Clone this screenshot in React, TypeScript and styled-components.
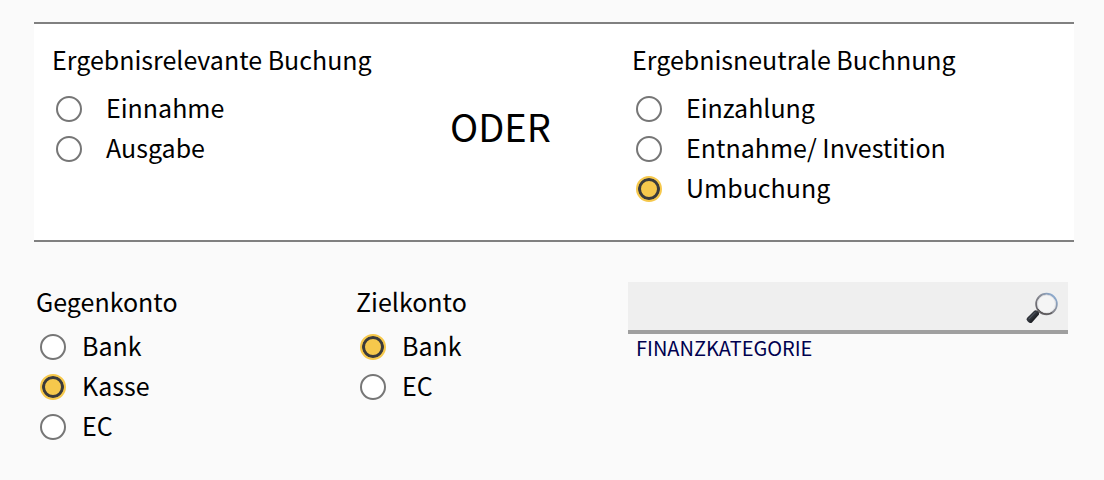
import React, { useState } from 'react';
import styled, { createGlobalStyle } from 'styled-components';

const GlobalStyle = createGlobalStyle`
  * { box-sizing: border-box; }
  body {
    margin: 0;
    background: #fafafa;
    color: #000;
    font-family: "Noto Sans CJK SC", "Noto Sans", sans-serif;
    font-size: 25px;
    line-height: 40px;
  }
`;

const Page = styled.main`
  padding: 22px 30px 32px 34px;
`;

const BookingPanel = styled.section`
  display: grid;
  grid-template-columns: 400fr 180fr 444fr;
  padding: 16px 0 31px 16px;
  background: #fff;
  border-top: 2px solid #808080;
  border-bottom: 2px solid #808080;
`;

const Accounts = styled.section`
  display: grid;
  grid-template-columns: 320fr 274fr 440fr;
  align-items: start;
  padding: 40px 6px 0 0;
`;

const Group = styled.fieldset`
  min-width: 0;
  margin: 0;
  padding: 0;
  border: 0;
`;

const Legend = styled.legend<{ $tall?: boolean }>`
  padding: 0 0 0 2px;
  height: ${({ $tall }) => ($tall ? 49 : 45)}px;
  line-height: 38px;
  white-space: nowrap;
`;

const Option = styled.label<{ $gap: number }>`
  display: flex;
  align-items: center;
  gap: ${({ $gap }) => $gap}px;
  height: 40px;
  padding-left: 6px;
  white-space: nowrap;
`;

const OptionText = styled.span`
  padding-bottom: 4px;
`;

const Radio = styled.input`
  appearance: none;
  flex: none;
  width: 26px;
  height: 26px;
  margin: 0;
  border: 2px solid #767676;
  border-radius: 50%;
  background: #fff;

  &:checked {
    border-color: #f6c84c;
    background: #f6c84c;
    box-shadow: inset 0 0 0 3px #3b3b3b;
  }
`;

const Or = styled.p`
  margin: 0;
  padding-top: 66px;
  font-size: 38px;
`;

const SearchField = styled.div`
  display: flex;
  flex-direction: column;
`;

const SearchBar = styled.div`
  display: flex;
  align-items: center;
  height: 52px;
  padding-right: 10px;
  background: #efefef;
  border-bottom: 4px solid #9f9f9f;
`;

const SearchInput = styled.input`
  flex: 1;
  min-width: 0;
  height: 48px;
  padding: 0 8px;
  border: 0;
  outline: 0;
  background: transparent;
  font: inherit;
`;

const SearchButton = styled.button`
  display: flex;
  padding: 6px 0 0;
  border: 0;
  background: transparent;
`;

const SearchLabel = styled.label`
  padding-left: 8px;
  color: #00004f;
  font-size: 20px;
  line-height: 28px;
`;

function Magnifier() {
  return (
    <svg width="32" height="34" viewBox="0 0 32 34" aria-hidden="true">
      <defs>
        <linearGradient id="rim" x1="0" y1="1" x2="1" y2="0">
          <stop offset="0" stopColor="#59565a" />
          <stop offset="0.55" stopColor="#8b8d96" />
          <stop offset="1" stopColor="#8cb5e4" />
        </linearGradient>
        <linearGradient id="grip" x1="0" y1="0" x2="1" y2="1">
          <stop offset="0" stopColor="#17191d" />
          <stop offset="0.45" stopColor="#353940" />
          <stop offset="0.7" stopColor="#16181c" />
          <stop offset="1" stopColor="#050608" />
        </linearGradient>
      </defs>
      <path d="M14 18 L10.500 22" stroke="#77736f" strokeWidth="3" />
      <path d="M8.300 18.700 Q10 17.700 12 19.600 Q13.800 21.400 12.600 23 L6 30.500 Q4.300 32 2 29.800 Q-.2 27.500 1.200 25.800 Z" fill="url(#grip)" />
      <path d="M3 26.800 L9 20.400" stroke="#565d67" strokeWidth="1" strokeLinecap="round" />
      <circle cx="20.500" cy="12" r="10.300" fill="#f5f5f5" stroke="url(#rim)" strokeWidth="1.900" />
      <circle cx="20.500" cy="12" r="9" fill="none" stroke="#d9dbe0" strokeWidth="0.800" />
      <path d="M12 17 A10.300 10.300 0 0 0 26 20.700" fill="none" stroke="#55504e" strokeWidth="1" />
    </svg>
  );
}

type RadioGroupProps = {
  name: string;
  title: string;
  options: string[];
  value: string;
  onChange: (value: string) => void;
  wide?: boolean;
};

function RadioGroup({ name, title, options, value, onChange, wide }: RadioGroupProps) {
  return (
    <Group>
      <Legend $tall={wide}>{title}</Legend>
      {options.map((option) => (
        <Option key={option} $gap={wide ? 24 : 16}>
          <Radio
            type="radio"
            name={name}
            value={option}
            checked={value === option}
            onChange={() => onChange(option)}
          />
          <OptionText>{option}</OptionText>
        </Option>
      ))}
    </Group>
  );
}

export default function App() {
  const [booking, setBooking] = useState('Umbuchung');
  const [source, setSource] = useState('Kasse');
  const [target, setTarget] = useState('Bank');

  return (
    <>
      <GlobalStyle />
      <Page>
        <BookingPanel>
          <RadioGroup
            wide
            name="booking"
            title="Ergebnisrelevante Buchung"
            options={['Einnahme', 'Ausgabe']}
            value={booking}
            onChange={setBooking}
          />
          <Or>ODER</Or>
          <RadioGroup
            wide
            name="booking"
            title="Ergebnisneutrale Buchnung"
            options={['Einzahlung', 'Entnahme/ Investition', 'Umbuchung']}
            value={booking}
            onChange={setBooking}
          />
        </BookingPanel>
        <Accounts>
          <RadioGroup
            name="source"
            title="Gegenkonto"
            options={['Bank', 'Kasse', 'EC']}
            value={source}
            onChange={setSource}
          />
          <RadioGroup
            name="target"
            title="Zielkonto"
            options={['Bank', 'EC']}
            value={target}
            onChange={setTarget}
          />
          <SearchField>
            <SearchBar>
              <SearchInput id="category" type="text" />
              <SearchButton type="button" aria-label="Suchen">
                <Magnifier />
              </SearchButton>
            </SearchBar>
            <SearchLabel htmlFor="category">FINANZKATEGORIE</SearchLabel>
          </SearchField>
        </Accounts>
      </Page>
    </>
  );
}
